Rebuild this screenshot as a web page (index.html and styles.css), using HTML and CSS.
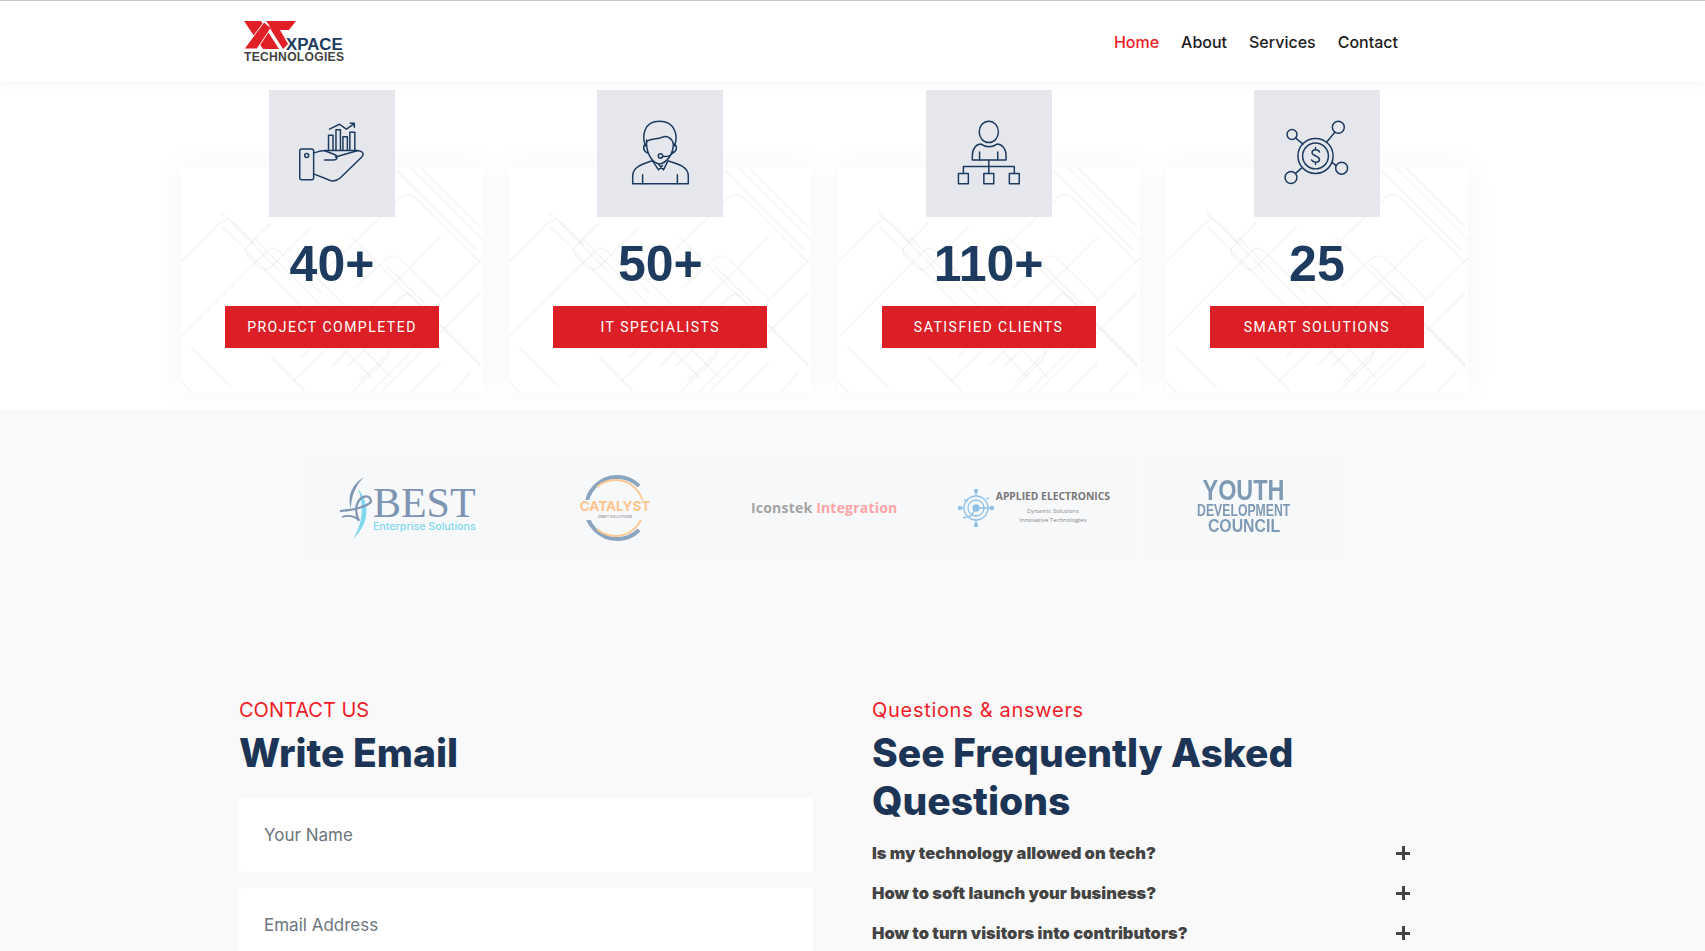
FILE: index.html
```html
<!DOCTYPE html>
<html lang="en">
<head>
<meta charset="utf-8">
<title>Xpace Technologies</title>
<link rel="stylesheet" href="styles.css">
</head>
<body>
<header class="site-header">
  <a class="brand" href="#">
    <svg class="brand-logo" width="104" height="42" viewBox="0 0 104 42">
      <g fill="#e01f26">
        <polygon points="0,0 17,0 35,28 19,28"/>
        <polygon class="brand-cut" points="0,28 13,28 27,7 20,1"/>
        <polygon points="22,0 52,0 45,9 36,9 44,23 39,28 27,9 25,4"/>
      </g>
      <text class="brand-x" x="42" y="29">XPACE</text>
      <text class="brand-t" x="0" y="40">TECHNOLOGIES</text>
    </svg>
  </a>
  <nav class="nav">
    <a class="nav-link is-active" href="#">Home</a>
    <a class="nav-link" href="#">About</a>
    <a class="nav-link" href="#">Services</a>
    <a class="nav-link" href="#">Contact</a>
  </nav>
</header>

<svg class="defs" width="0" height="0">
  <defs>
    <g id="pattern" fill="none" stroke="#000" stroke-opacity=".05" stroke-width="1.200">
      <path d="M215 3 L295 83 M240 1 L300 61"/>
      <path d="M229 0 L305 76 Q310 84 303 90 L178 215 M170 70 L300 200"/>
      <path d="M148 100 L220 30 Q228 24 236 32 L300 96"/>
      <path d="M135 110 L205 180 Q210 186 205 192 L172 225"/>
      <path d="M205 98 L255 148 Q260 154 255 160 L190 225"/>
      <path d="M72 70 L210 210 M42 60 L190 210"/>
      <path d="M0 170 L85 85 Q92 78 99 85 L140 126"/>
      <path d="M10 180 L50 220 M130 60 L90 100 Q84 106 78 100 L68 90 Q62 84 68 78 L90 56"/>
      <path d="M40 45 L100 105 M0 95 L40 55 Q46 50 52 55 L75 78"/>
      <path d="M175 120 L205 92 Q212 86 220 92 L260 132 M112 215 L260 70 M160 145 L185 170 Q190 176 185 182 L165 200"/>
      <path d="M150 200 L220 130 Q226 124 232 130 L300 198 M120 190 L150 160 M200 225 L300 125"/>
      <path d="M230 225 L260 195 M0 215 L10 225 M90 190 L124 224 M272 225 L290 205"/>
    </g>
  </defs>
</svg>

<section class="stats">
  <article class="stat-card">
    <svg class="card-pattern" viewBox="0 0 302 225"><use href="#pattern"/></svg>
    <div class="stat-icon">
      <svg width="126" height="127" viewBox="0 0 127 127" class="ico">
        <rect x="31" y="59" width="14" height="31" rx="2"/>
        <circle cx="38" cy="65.600" r="2"/>
        <path d="M45 63 C49 62 53 60 57 61 L66 64.500 C70 66 69 70 65 70 L56 70"/>
        <path d="M67 67 L88 61 C93 59.500 97 64 93.500 67 L72 88 C68 91.500 64 92 60 90 L45 84"/>
        <path d="M56 60.500 H90"/>
        <path d="M60 60 V45 H64.500 V60 M67.500 60 V39.500 H72 V60 M74.500 60 V46.500 H79 V60 M81.500 60 V42 H86.500 V60"/>
        <path d="M61 39 L71 34 L78 39 L86 33.500 M82 33 H86 V37"/>
      </svg>
    </div>
    <div class="stat-num">40+</div>
    <div class="stat-label">PROJECT COMPLETED</div>
  </article>

  <article class="stat-card">
    <svg class="card-pattern" viewBox="0 0 302 225"><use href="#pattern"/></svg>
    <div class="stat-icon">
      <svg width="126" height="127" viewBox="0 0 127 127" class="ico">
        <path d="M49 56 C45 46 47 31 63 31 C79 31 82 46 78 56"/>
        <path d="M50 52 C52 48 60 50 66 47 C70 45 76 48 77 54"/>
        <path d="M50 50 C49 62 55 73 63 74 C71 73 77 63 77 54"/>
        <path d="M49.500 54 C46 55 46 61 51 63 M78 54 C81 56 81 61 76 63"/>
        <circle cx="64" cy="66" r="2.200"/>
        <path d="M66 66.500 C71 67 75 66 77 62"/>
        <path d="M56 71 L62 80 L66 75.500 M71.500 71 L67 80 L62.500 75"/>
        <path d="M36 94 H92 M36 94 V86 C36 77 46 74 55 71 M92 94 V86 C92 77 82 74 72 71"/>
        <path d="M46 85 V94 M81 85 V94"/>
      </svg>
    </div>
    <div class="stat-num">50+</div>
    <div class="stat-label">IT SPECIALISTS</div>
  </article>

  <article class="stat-card">
    <svg class="card-pattern" viewBox="0 0 302 225"><use href="#pattern"/></svg>
    <div class="stat-icon">
      <svg width="126" height="127" viewBox="0 0 127 127" class="ico">
        <ellipse cx="63.300" cy="41.700" rx="9.700" ry="10.700"/>
        <path d="M46.700 70 H80.700 V66 C80.700 58 76 54 71.500 54 C67 57.500 60 57.500 55.500 54 C51 54 46.700 58 46.700 66 Z"/>
        <path d="M54 62 V70 M72.300 62 V70 M63.300 70 V83.700 M37.700 83.700 V76.700 H89 V83.700"/>
        <rect x="32.700" y="83.700" width="10" height="10.300"/>
        <rect x="58.300" y="83.700" width="10" height="10.300"/>
        <rect x="84" y="83.700" width="10" height="10.300"/>
      </svg>
    </div>
    <div class="stat-num">110+</div>
    <div class="stat-label">SATISFIED CLIENTS</div>
  </article>

  <article class="stat-card">
    <svg class="card-pattern" viewBox="0 0 302 225"><use href="#pattern"/></svg>
    <div class="stat-icon">
      <svg width="126" height="127" viewBox="0 0 127 127" class="ico">
        <circle cx="62" cy="66" r="17.700"/>
        <circle cx="62" cy="66" r="13"/>
        <path d="M66 62 C65 59 58.500 59 58.500 62.500 C58.500 66.500 66 65.500 66 69.500 C66 73 59.500 73 58 70 M62 57.500 V59.500 M62 72.500 V74.500"/>
        <circle cx="38.300" cy="44.300" r="5"/>
        <circle cx="85" cy="37" r="6"/>
        <circle cx="88.300" cy="78.300" r="6"/>
        <circle cx="37.300" cy="87.700" r="6"/>
        <path d="M42 48 L49.500 54 M73.300 52 L81.500 42 M78.700 72.500 L82.500 75.500 M47.500 78.500 L42 83.500"/>
      </svg>
    </div>
    <div class="stat-num">25</div>
    <div class="stat-label">SMART SOLUTIONS</div>
  </article>
</section>

<section class="partners">
  <div class="tile">
    <svg class="swirl" width="34" height="62" viewBox="0 0 34 62">
      <path d="M24 0 C11 8 7 20 11 32 C11 20 15 9 24 0 Z" fill="#7d94b3"/>
      <path d="M18 12 C24 28 23 46 13 62 C30 46 30 26 18 12 Z" fill="#7fd8ee"/>
      <path d="M0 34 C12 33 26 30 31 25 C31 17 22 18 18 25 C15 31 16 38 19 44" fill="none" stroke="#7d94b3" stroke-width="2.200"/>
      <path d="M2 40 C8 38 14 39 19 43" fill="none" stroke="#7d94b3" stroke-width="1.800"/>
    </svg>
    <div class="best">
      <span class="best-name">BEST</span>
      <span class="best-sub">Enterprise Solutions</span>
    </div>
  </div>

  <div class="tile">
    <svg width="72" height="70" viewBox="0 0 72 70">
      <path d="M60 13 A31 31 0 1 0 60 57" fill="none" stroke="#8aa5bf" stroke-width="4"/>
      <path d="M18 14 A28 28 0 1 1 18 56" fill="none" stroke="#ffc994" stroke-width="2"/>
      <rect x="0" y="27" width="72" height="20" fill="#f7f8fa"/>
      <text class="cat-name" x="36" y="38" text-anchor="middle">CATALYST</text>
      <text class="cat-sub" x="36" y="45" text-anchor="middle">ORBIT SOLUTIONS</text>
    </svg>
  </div>

  <div class="tile">
    <span class="icons-name">Iconstek <span class="icons-accent">Integration</span></span>
  </div>

  <div class="tile">
    <svg width="36" height="38" viewBox="0 0 36 38" fill="none" stroke="#8fc0e8" stroke-width="1.300">
      <circle cx="18" cy="19" r="12"/>
      <circle cx="18" cy="19" r="8"/>
      <circle cx="18" cy="19" r="3" fill="#8fc0e8"/>
      <path d="M18 1 V7 M18 31 V37 M1 19 H6 M20 19 H33 M6 11 L10 12 M5 29 L13 27 L18 19 M28 10 L31 9"/>
      <circle cx="18" cy="2" r="1.500" fill="#8fc0e8"/>
      <circle cx="18" cy="36" r="1.500" fill="#8fc0e8"/>
      <circle cx="2" cy="19" r="1.500" fill="#8fc0e8"/>
      <circle cx="34" cy="19" r="1.500" fill="#8fc0e8"/>
    </svg>
    <div class="applied">
      <span class="applied-name">APPLIED ELECTRONICS</span>
      <span class="applied-sub">Dynamic Solutions</span>
      <span class="applied-sub">Innovative Technologies</span>
    </div>
  </div>

  <div class="tile">
    <div class="youth">
      <span class="youth-a">YOUTH</span>
      <span class="youth-b">DEVELOPMENT</span>
      <span class="youth-c">COUNCIL</span>
    </div>
  </div>
</section>

<main class="lower">
  <section class="col-contact">
    <p class="eyebrow">CONTACT US</p>
    <h2 class="heading">Write Email</h2>
    <form class="form">
      <input class="field" type="text" placeholder="Your Name">
      <input class="field" type="email" placeholder="Email Address">
    </form>
  </section>
  <section class="col-faq">
    <p class="eyebrow is-lower">Questions &amp; answers</p>
    <h2 class="heading">See Frequently Asked Questions</h2>
    <ul class="faq">
      <li class="faq-row"><span>Is my technology allowed on tech?</span><span class="plus"></span></li>
      <li class="faq-row"><span>How to soft launch your business?</span><span class="plus"></span></li>
      <li class="faq-row"><span>How to turn visitors into contributors?</span><span class="plus"></span></li>
    </ul>
  </section>
</main>
</body>
</html>
```

FILE: styles.css
```css
* { box-sizing: border-box; }
html, body { margin: 0; padding: 0; height: 100%; overflow: hidden; }
body { font-family: Inter, "Noto Sans", sans-serif; background: #f9f9f9; color: #222; }

.defs { display: block; height: 0; }

.site-header {
  height: 82px;
  display: flex;
  align-items: center;
  justify-content: space-between;
  padding: 0 307px 0 244px;
  background: #fff;
  border-top: 1px solid #c8c8c8;
  box-shadow: 0 2px 8px rgba(0, 0, 0, .05);
  position: relative;
  z-index: 2;
}
.brand { display: block; height: 42px; margin-top: 1px; }
.brand-logo { display: block; overflow: visible; }
.brand-cut { stroke: #fff; stroke-width: 1; }
.brand-x { font: 700 16.800px "Liberation Sans", sans-serif; fill: #1d3a5f; }
.brand-t { font: 700 12.100px "Liberation Sans", sans-serif; fill: #444; letter-spacing: .3px; }
.nav { display: flex; gap: 22px; }
.nav-link { font-size: 16px; font-weight: 500; color: #1c1c1c; text-decoration: none; }
.nav-link.is-active { color: #ea1c24; }

.stats {
  background: #fff;
  height: 328px;
  padding: 85px 0 0 181px;
  display: grid;
  grid-template-columns: repeat(4, 302px);
  column-gap: 26.300px;
  align-items: start;
}
.stat-card {
  position: relative;
  height: 225px;
  background: #fff;
  box-shadow: 0 0 30px rgba(0, 0, 0, .045);
  display: flex;
  flex-direction: column;
  align-items: center;
}
.card-pattern { position: absolute; inset: 0; width: 302px; height: 225px; filter: blur(.5px); }
.stat-icon {
  position: relative;
  width: 126px;
  height: 127px;
  margin-top: -77px;
  background: #e5e7ed;
}
.ico { display: block; fill: none; stroke: #1d3a5f; stroke-width: 1.500; stroke-linecap: round; stroke-linejoin: round; }
.stat-num {
  position: relative;
  font-family: "Liberation Sans", Arial, sans-serif;
  font-weight: 700;
  font-size: 50px;
  line-height: 60px;
  margin-top: 17px;
  color: #1d3a5f;
}
.stat-label {
  position: relative;
  width: 214px;
  height: 42px;
  margin-top: 12px;
  background: #dc1f26;
  color: #fff;
  font-family: Roboto, sans-serif;
  font-size: 14px;
  font-weight: 400;
  letter-spacing: 1.500px;
  display: flex;
  align-items: center;
  justify-content: center;
}

.partners {
  display: flex;
  gap: 10px;
  padding: 49px 0 0 305px;
}
.tile {
  flex: 0 0 199.700px;
  height: 94px;
  padding-top: 3px;
  background: #f7f8fa;
  display: flex;
  align-items: center;
  justify-content: center;
}
.best { display: flex; flex-direction: column; margin-left: 3px; }
.best-name { font: 400 42px/36px "Liberation Serif", serif; color: #7d94b3; padding-top: 2px; }
.best-sub { font-size: 10.700px; line-height: 12px; color: #7fd8ee; font-weight: 500; }
.swirl { margin: 0 -4px 0 6px; }
.cat-name { font: 700 13.500px Inter, sans-serif; fill: #ffc48c; }
.cat-sub { font: 700 3.800px Inter, sans-serif; fill: #aaa; }
.icons-name { font: 700 14px "Open Sans", sans-serif; color: #a3a3a3; letter-spacing: .2px; }
.icons-accent { color: #ffa5a5; }
.applied { display: flex; flex-direction: column; align-items: center; margin-left: 2px; }
.applied-name { font: 700 10.300px "Open Sans", sans-serif; color: #777; line-height: 13px; margin-bottom: 4px; white-space: nowrap; }
.applied-sub { font: 400 6px/9px "Open Sans", sans-serif; color: #888; }
.youth { display: flex; flex-direction: column; align-items: center; font-family: "Liberation Sans", sans-serif; font-weight: 700; color: #7f9ab5; margin-top: -3px; }
.youth-a { font-size: 30px; line-height: 26px; transform: scaleX(.78); }
.youth-b { font-size: 17px; line-height: 15px; transform: scaleX(.72); white-space: nowrap; }
.youth-c { font-size: 18px; line-height: 17px; transform: scaleX(.88); }

.lower {
  display: grid;
  grid-template-columns: 574px 548px;
  column-gap: 59px;
  padding: 142px 0 0 239px;
}
.eyebrow { margin: 0; font-size: 20px; line-height: 30px; color: #f01c28; }
.eyebrow.is-lower { letter-spacing: .7px; }
.heading {
  margin: 4px 0 0;
  font-size: 39px;
  line-height: 48px;
  font-weight: 800;
  color: #1c3557;
}
.form { display: flex; flex-direction: column; gap: 16px; margin-top: 21px; }
.field {
  display: block;
  width: 574px;
  height: 74px;
  padding: 0 25px;
  border: 0;
  border-radius: 4px;
  background: #fff;
  font-family: Inter, sans-serif;
  font-size: 17px;
}
.field::placeholder { color: #6c757d; opacity: 1; }
.faq { list-style: none; margin: 8px 0 0; padding: 0; }
.faq-row {
  height: 40px;
  display: flex;
  align-items: center;
  justify-content: space-between;
  padding-right: 10px;
  font-size: 16.500px;
  font-weight: 900;
  color: #444;
}
.plus {
  position: relative;
  width: 14px;
  height: 14px;
  background: linear-gradient(#444, #444) center / 14px 3px no-repeat,
              linear-gradient(#444, #444) center / 3px 14px no-repeat;
}
```
